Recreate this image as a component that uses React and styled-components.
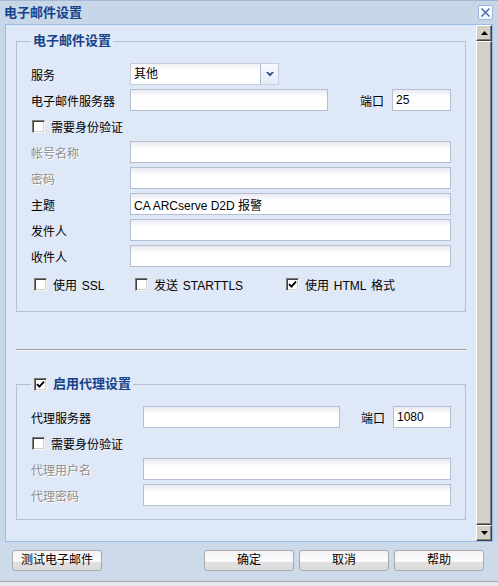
import React from 'react'
import styled, { createGlobalStyle } from 'styled-components'

const Global = createGlobalStyle`
  html, body {
    margin: 0;
    padding: 0;
    background: #c9d8e9;
  }
  body {
    font-family: "Liberation Sans", "Noto Sans CJK SC", sans-serif;
    font-size: 12px;
    color: #000;
  }
`;

const Window = styled.div`
  width: 498px;
  height: 586px;
  box-sizing: border-box;
  display: flex;
  flex-direction: column;
  background: #c7d7e8;
  border-top: 1px solid #a3b7d3;
`;

const TitleBar = styled.div`
  height: 23px;
  flex: none;
  display: flex;
  align-items: center;
  justify-content: space-between;
  padding: 0 5px 0 4px;
`;

const Title = styled.div`
  font-size: 13px;
  font-weight: bold;
  color: #15428b;
  line-height: 16px;
`;

const CloseButton = styled.div`
  width: 15px;
  height: 15px;
  box-sizing: border-box;
  border: 1px solid #9cb6df;
  border-radius: 2px;
  background: linear-gradient(#ffffff, #eef3fb);
  display: flex;
  align-items: center;
  justify-content: center;
`;

const Panel = styled.div`
  height: 518px;
  flex: none;
  margin: 0 5px;
  box-sizing: border-box;
  border: 1px solid #99bbe8;
  background: #dfe8f6;
  display: flex;
`;

const Scroll = styled.div`
  flex: 1;
  min-width: 0;
  overflow: hidden;
  padding-top: 8px;
`;

const Group = styled.fieldset`
  margin: 0 10px;
  padding: 14px 14px ${p => p.$pb}px 14px;
  border: 1px solid #b4bfd0;
  min-width: 0;
`;

const Legend = styled.legend`
  padding: 0 2px 0 ${p => p.$pl}px;
  line-height: 16px;
  font-size: 13px;
  font-weight: bold;
  color: #15428b;
  display: flex;
  align-items: center;
  gap: 6px;
`;

const Rows = styled.div`
  display: flex;
  flex-direction: column;
  gap: 4px;
`;

const Row = styled.div`
  display: flex;
  align-items: center;
  height: 22px;
  margin-top: ${p => p.$mt || 0}px;
  padding-left: ${p => p.$indent || 0}px;
`;

const Label = styled.div`
  flex: none;
  width: ${p => p.$w}px;
  margin-left: ${p => p.$ml || 0}px;
  white-space: nowrap;
  color: ${p => (p.$disabled ? '#8e8e8e' : '#000')};
  text-shadow: ${p => (p.$disabled ? '1px 1px 0 #ffffff' : 'none')};
`;

const Input = styled.input`
  flex: ${p => (p.$w ? `0 0 ${p.$w}px` : '1 1 auto')};
  min-width: 0;
  height: 22px;
  box-sizing: border-box;
  margin: 0;
  padding: 0 3px;
  border: 1px solid #b5bdd1;
  background: linear-gradient(#eae9f1, #ffffff 7px);
  font: inherit;
  font-size: 12px;
  color: #000;
  outline: none;
`;

const Select = styled.div`
  width: 149px;
  height: 22px;
  box-sizing: border-box;
  display: flex;
  border: 1px solid #c6cddd;
  background: linear-gradient(#f1f0f5, #ffffff 7px);
`;

const SelectText = styled.div`
  flex: 1;
  padding-left: 3px;
  line-height: 20px;
`;

const SelectArrow = styled.div`
  width: 17px;
  flex: none;
  border-left: 1px solid #b5bdd1;
  background: linear-gradient(#f7f9fd, #e4ebf6);
  display: flex;
  align-items: center;
  justify-content: center;
`;

const Box = styled.span`
  width: 13px;
  height: 13px;
  flex: none;
  box-sizing: border-box;
  background: #fff;
  border: 1px solid;
  border-color: #7c7c7c #f4f4f4 #f4f4f4 #7c7c7c;
  box-shadow: inset 1px 1px 0 #404040, inset -1px -1px 0 #d4d0c8;
  display: inline-flex;
  align-items: center;
  justify-content: center;
`;

const CheckItem = styled.label`
  display: inline-flex;
  align-items: center;
  gap: 6px;
  width: ${p => (p.$w ? `${p.$w}px` : 'auto')};
  flex: none;
  white-space: nowrap;
  word-spacing: 1.5px;
`;

const Separator = styled.div`
  margin: 37px 10px 25px;
  border-top: 1px solid #9f9e9c;
  border-bottom: 1px solid #f3f6fb;
`;

const ScrollBar = styled.div`
  width: 16px;
  flex: none;
  display: flex;
  flex-direction: column;
`;

const Raised = styled.div`
  box-sizing: border-box;
  background: #d4d0c8;
  border: 1px solid;
  border-color: #ffffff #404040 #404040 #ffffff;
  box-shadow: inset -1px -1px 0 #808080;
  display: flex;
  align-items: center;
  justify-content: center;
  height: ${p => (p.$grow ? 'auto' : '16px')};
  flex: ${p => (p.$grow ? '1' : 'none')};
`;

const Footer = styled.div`
  height: 40px;
  flex: none;
  box-sizing: border-box;
  display: flex;
  align-items: flex-start;
  justify-content: space-between;
  padding: 8px 14px 0 12px;
  background: #cddaea;
  border-bottom: 1px solid #a2a8b1;
`;

const BottomEdge = styled.div`
  flex: 1;
  background: #e7e9ed;
`;

const ButtonGroup = styled.div`
  display: flex;
  gap: 5px;
`;

const Button = styled.button`
  width: 90px;
  height: 21px;
  margin: 0;
  padding: 0;
  border: 1px solid #a9a9a9;
  border-radius: 3px;
  background: linear-gradient(180deg, #f5f3f7 0%, #fbfafc 55%, #e0e0e0 58%, #dbdbdb 100%);
  font: inherit;
  font-size: 12px;
  color: #000;
  line-height: 19px;
`;

const Check = ({ checked }) => (
  <Box>
    {checked && (
      <svg width="9" height="9" viewBox="0 0 9 9">
        <path d="M1 4.2 L3.4 6.6 L8 1.6" fill="none" stroke="#000" strokeWidth="1.9" />
      </svg>
    )}
  </Box>
);

const Chevron = () => (
  <svg width="8" height="5" viewBox="0 0 8 5">
    <polygon points="0,0 2.2,0 4,1.8 5.8,0 8,0 4,4.5" fill="#2c4a86" />
  </svg>
);

const Triangle = ({ down }) => (
  <svg width="7" height="4" viewBox="0 0 7 4">
    <polygon points={down ? '0,0 7,0 3.5,4' : '0,4 7,4 3.5,0'} fill="#000" />
  </svg>
);

const App = () => (
  <>
    <Global />
    <Window>
      <TitleBar>
        <Title>电子邮件设置</Title>
        <CloseButton>
          <svg width="11" height="11" viewBox="0 0 11 11">
            <path d="M1.5 1.5 L9.5 9.5 M9.5 1.5 L1.5 9.5" stroke="#3f63a6" strokeWidth="1.4" />
          </svg>
        </CloseButton>
      </TitleBar>

      <Panel>
        <Scroll>
          <Group $pb={16}>
            <Legend $pl={2}>电子邮件设置</Legend>
            <Rows>
              <Row>
                <Label $w={99}>服务</Label>
                <Select>
                  <SelectText>其他</SelectText>
                  <SelectArrow><Chevron /></SelectArrow>
                </Select>
              </Row>
              <Row>
                <Label $w={99}>电子邮件服务器</Label>
                <Input $w={198} defaultValue="" />
                <Label $w={32} $ml={32}>端口</Label>
                <Input defaultValue="25" />
              </Row>
              <Row $indent={1}>
                <CheckItem><Check />需要身份验证</CheckItem>
              </Row>
              <Row>
                <Label $w={99} $disabled>帐号名称</Label>
                <Input defaultValue="" />
              </Row>
              <Row>
                <Label $w={99} $disabled>密码</Label>
                <Input defaultValue="" />
              </Row>
              <Row>
                <Label $w={99}>主题</Label>
                <Input defaultValue="CA ARCserve D2D 报警" />
              </Row>
              <Row>
                <Label $w={99}>发件人</Label>
                <Input defaultValue="" />
              </Row>
              <Row>
                <Label $w={99}>收件人</Label>
                <Input defaultValue="" />
              </Row>
              <Row $mt={2} $indent={3}>
                <CheckItem $w={101}><Check />使用 SSL</CheckItem>
                <CheckItem $w={151}><Check />发送 STARTTLS</CheckItem>
                <CheckItem><Check checked />使用 HTML 格式</CheckItem>
              </Row>
            </Rows>
          </Group>

          <Separator />

          <Group $pb={13}>
            <Legend $pl={3}><Check checked />启用代理设置</Legend>
            <Rows>
              <Row>
                <Label $w={112}>代理服务器</Label>
                <Input $w={197} defaultValue="" />
                <Label $w={32} $ml={21}>端口</Label>
                <Input defaultValue="1080" />
              </Row>
              <Row $indent={1}>
                <CheckItem><Check />需要身份验证</CheckItem>
              </Row>
              <Row>
                <Label $w={112} $disabled>代理用户名</Label>
                <Input defaultValue="" />
              </Row>
              <Row>
                <Label $w={112} $disabled>代理密码</Label>
                <Input defaultValue="" />
              </Row>
            </Rows>
          </Group>
        </Scroll>

        <ScrollBar>
          <Raised><Triangle /></Raised>
          <Raised $grow />
          <Raised><Triangle down /></Raised>
        </ScrollBar>
      </Panel>

      <Footer>
        <Button>测试电子邮件</Button>
        <ButtonGroup>
          <Button>确定</Button>
          <Button>取消</Button>
          <Button>帮助</Button>
        </ButtonGroup>
      </Footer>
      <BottomEdge />
    </Window>
  </>
);

export default App;
